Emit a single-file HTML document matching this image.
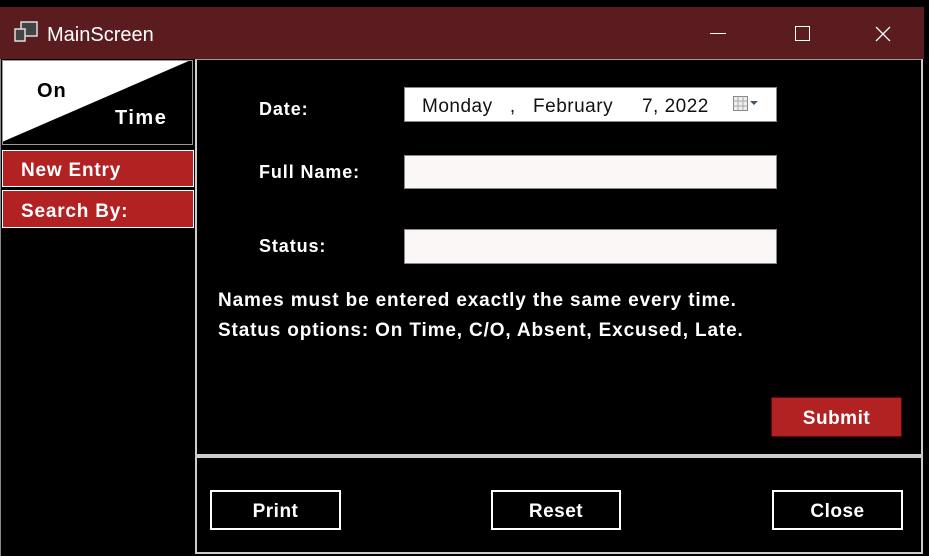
<!DOCTYPE html>
<html><head><style>
*{margin:0;padding:0;box-sizing:border-box}
body{width:929px;height:556px;background:#000;position:relative;overflow:hidden;font-family:"Liberation Sans",sans-serif;color:#fff}
.a{position:absolute}
.b{font-weight:bold;font-size:18px;letter-spacing:0.9px}
.inp{background:#fcf7f7;border:1px solid #888}
.btn{border:2px solid #fff;text-align:center;font-weight:bold;font-size:19px;line-height:40px;letter-spacing:0.5px}
</style></head><body>
<div class="a" style="left:0;top:7px;width:924px;height:52px;background:#5a1c1e"></div>
<svg class="a" style="left:14px;top:21px" width="26" height="24"><rect x="7" y="1" width="16" height="14" fill="#444" stroke="#ddd" stroke-width="1.5"/><rect x="1" y="8" width="10" height="12" fill="#444" stroke="#ddd" stroke-width="1.5"/></svg>
<div class="a" style="left:47px;top:24px;font-size:20px">MainScreen</div>
<div class="a" style="left:710px;top:33px;width:16px;height:1px;background:#fff"></div>
<div class="a" style="left:795px;top:26px;width:15px;height:15px;border:1px solid #fff"></div>
<svg class="a" style="left:875px;top:26px" width="16" height="16"><path d="M1 1L15 15M15 1L1 15" stroke="#fff" stroke-width="1.3"/></svg>
<div class="a" style="left:0;top:59px;width:924px;height:497px;background:#000;border-left:1px solid #888"></div>
<div class="a" style="left:195px;top:59px;width:728px;height:397px;border:2px solid #ccc;border-top:1px solid #999"></div>
<div class="a" style="left:195px;top:455px;width:728px;height:99px;border:2px solid #ccc;border-top:3px solid #ccc"></div>
<svg class="a" style="left:2px;top:60px" width="191" height="85"><rect width="191" height="85" fill="#000"/><polygon points="0,0 189,0 0,82" fill="#fff"/><rect x="0.5" y="0.5" width="190" height="84" fill="none" stroke="#999"/></svg>
<div class="a" style="left:37px;top:80px;color:#000;font-weight:bold;font-size:20px;letter-spacing:1px">On</div>
<div class="a" style="left:115px;top:107px;color:#fff;font-weight:bold;font-size:20px;letter-spacing:1.5px">Time</div>
<div class="a b" style="left:2px;top:150px;width:192px;height:37px;background:#b22222;border:1px solid #fff;padding:9px 0 0 18px;font-size:19px;letter-spacing:0.8px">New Entry</div>
<div class="a b" style="left:2px;top:190px;width:192px;height:38px;background:#b22222;border:1px solid #fff;padding:10px 0 0 18px;font-size:19px;letter-spacing:0.8px">Search By:</div>
<div class="a b" style="left:259px;top:99px">Date:</div>
<div class="a b" style="left:259px;top:162px">Full Name:</div>
<div class="a b" style="left:259px;top:236px">Status:</div>
<div class="a inp" style="left:404px;top:87px;width:373px;height:35px;background:#fff;color:#111;font-size:19px;padding:8px 0 0 17px;white-space:pre;letter-spacing:0.5px">Monday   ,   February     7, 2022</div>
<svg class="a" style="left:732px;top:95px" width="30" height="18"><rect x="1.5" y="1.5" width="14" height="14" fill="#eee" stroke="#888"/><path d="M1.5 6H15.5M1.5 11H15.5M6 1.5V15.5M11 1.5V15.5" stroke="#aaa"/><polygon points="18,6 26,6 22,10" fill="#456"/></svg>
<div class="a inp" style="left:404px;top:155px;width:373px;height:34px"></div>
<div class="a inp" style="left:404px;top:229px;width:373px;height:35px"></div>
<div class="a b" style="left:218px;top:286px;font-size:19px;letter-spacing:0.85px;line-height:30px;white-space:nowrap">Names must be entered exactly the same every time.<br>Status options: On Time, C/O, Absent, Excused, Late.</div>
<div class="a btn" style="left:771px;top:397px;width:131px;height:40px;background:#b22222;border:1px solid #600;line-height:42px">Submit</div>
<div class="a btn" style="left:210px;top:490px;width:131px;height:40px">Print</div>
<div class="a btn" style="left:491px;top:490px;width:130px;height:40px">Reset</div>
<div class="a btn" style="left:772px;top:490px;width:131px;height:40px">Close</div>
</body></html>
